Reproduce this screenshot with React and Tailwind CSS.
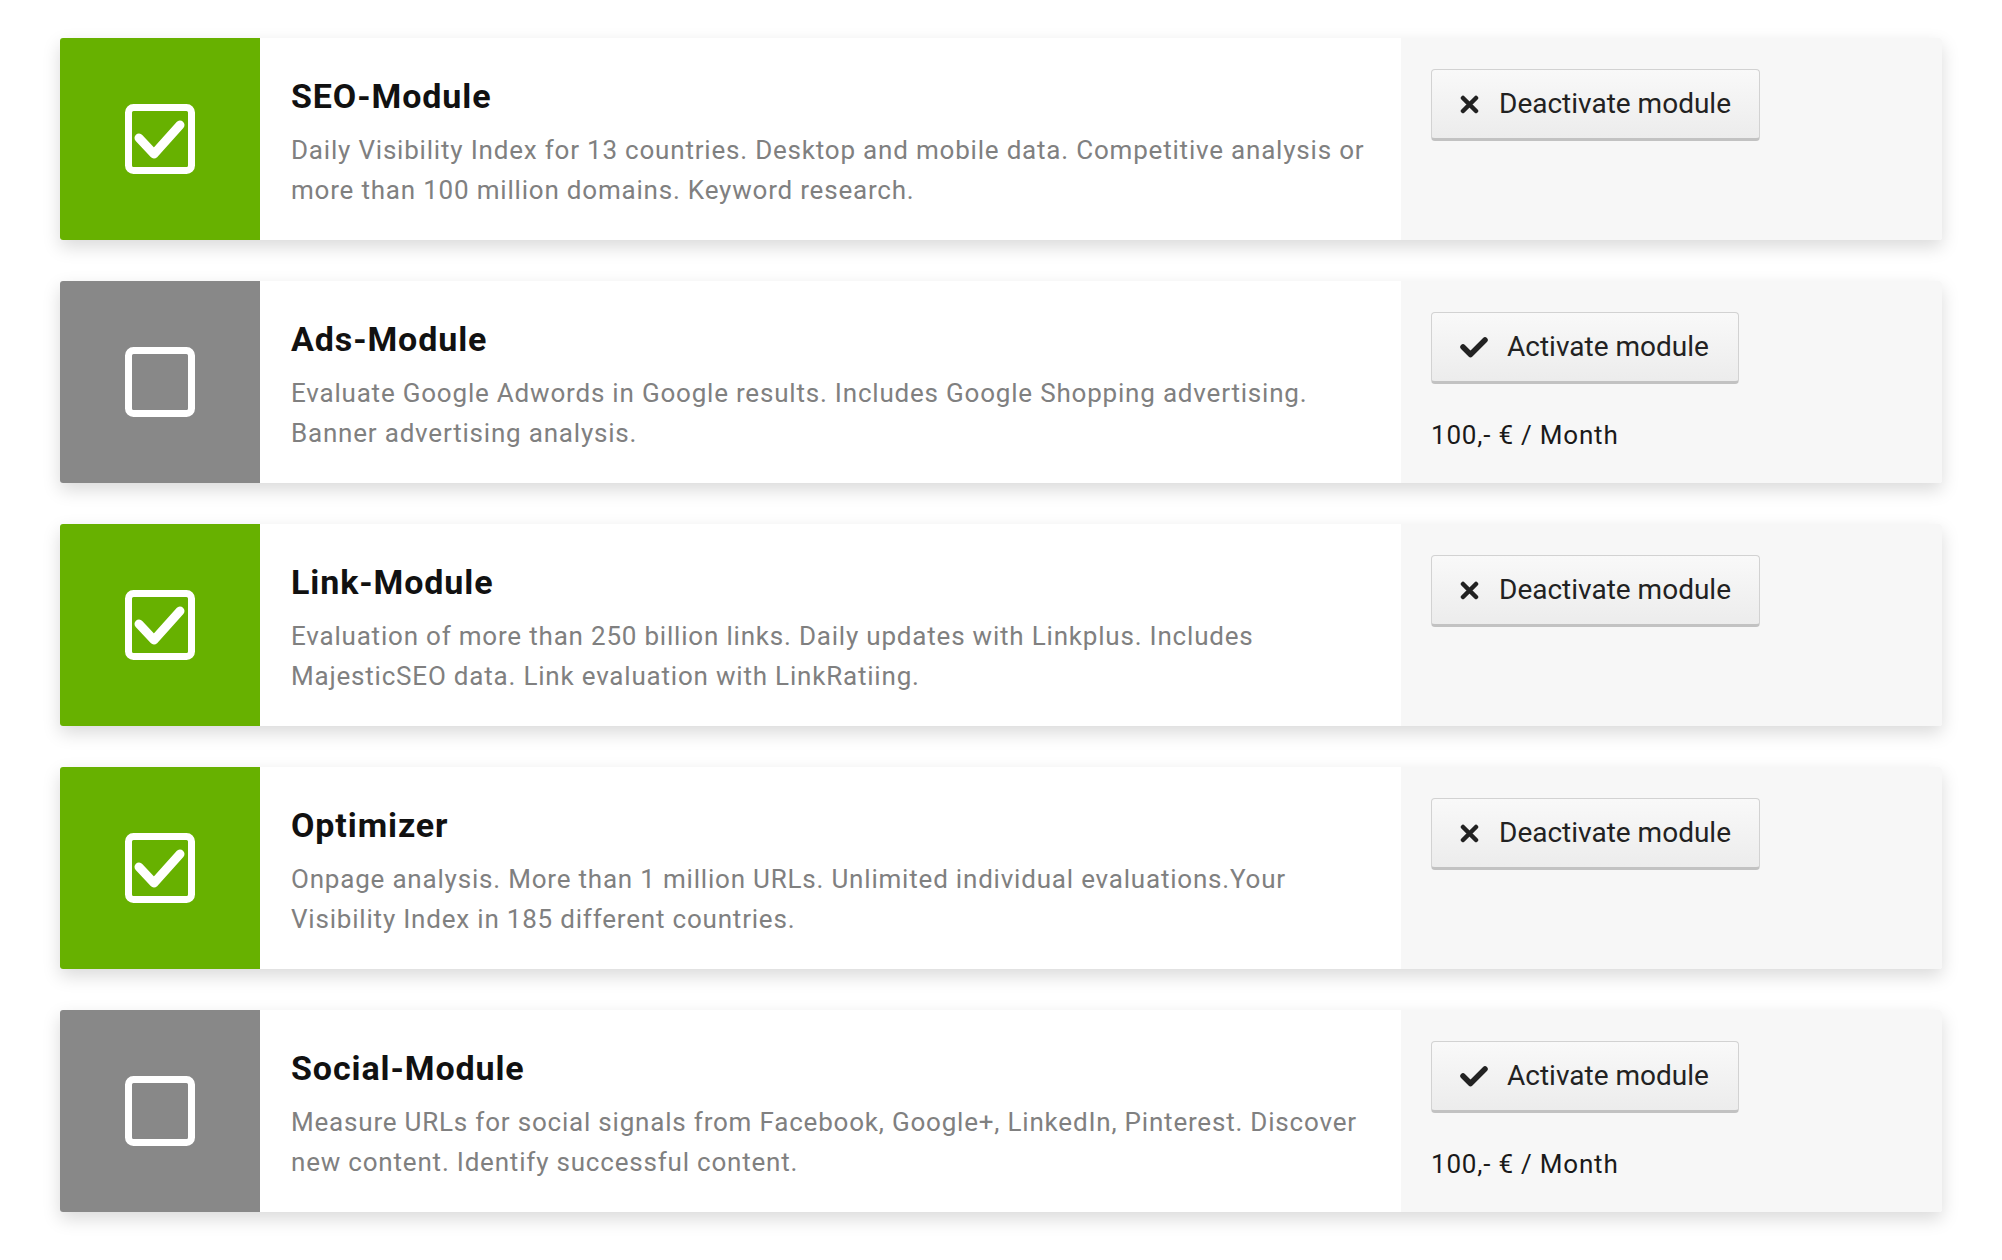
import React from "react";

const modules = [
  {
    title: "SEO-Module",
    text: "Daily Visibility Index for 13 countries. Desktop and mobile data. Competitive analysis or more than 100 million domains. Keyword research.",
    active: true,
  },
  {
    title: "Ads-Module",
    text: "Evaluate Google Adwords in Google results. Includes Google Shopping advertising. Banner advertising analysis.",
    active: false,
  },
  {
    title: "Link-Module",
    text: "Evaluation of more than 250 billion links. Daily updates with Linkplus. Includes MajesticSEO data. Link evaluation with LinkRatiing.",
    active: true,
  },
  {
    title: "Optimizer",
    text: "Onpage analysis. More than 1 million URLs. Unlimited individual evaluations.Your Visibility Index in 185 different countries.",
    active: true,
  },
  {
    title: "Social-Module",
    text: "Measure URLs for social signals from Facebook, Google+, LinkedIn, Pinterest. Discover new content. Identify successful content.",
    active: false,
  },
];

const BoxIcon = ({ checked }) => (
  <svg width="70" height="70" viewBox="0 0 70 70">
    <rect x="3.5" y="3.5" width="63" height="63" rx="5" fill="none" stroke="#fff" strokeWidth="7" />
    {checked && (
      <polyline
        points="14,34 29,50 55,21"
        fill="none"
        stroke="#fff"
        strokeWidth="9"
        strokeLinecap="round"
        strokeLinejoin="round"
      />
    )}
  </svg>
);

const TimesIcon = () => (
  <svg width="19" height="19" viewBox="0 0 19 19">
    <path d="M3 3 L16 16 M16 3 L3 16" stroke="#222" strokeWidth="4.5" strokeLinecap="round" />
  </svg>
);

const CheckIcon = () => (
  <svg width="28" height="21" viewBox="0 0 28 21">
    <polyline
      points="3,10 10.5,17.5 25,3"
      fill="none"
      stroke="#222"
      strokeWidth="5.5"
      strokeLinecap="round"
      strokeLinejoin="round"
    />
  </svg>
);

const ModuleCard = ({ mod }) => (
  <div className="flex min-h-[202px] rounded-[3px] shadow-[0_7px_18px_rgba(0,0,0,0.15)]">
    {/* Status */}
    <div
      className={
        mod.active
          ? "w-[200px] shrink-0 rounded-l-[3px] bg-[#67b100] flex items-center justify-center"
          : "w-[200px] shrink-0 rounded-l-[3px] bg-[#888888] flex items-center justify-center"
      }
    >
      <BoxIcon checked={mod.active} />
    </div>

    {/* Beschreibung */}
    <div className="flex-1 bg-white pt-[39px] pl-[31px] pr-[30px] pb-[28px]">
      <h2 className="text-[34px] leading-[38px] font-bold tracking-[0.9px] text-[#111]">{mod.title}</h2>
      <p className="mt-[15px] text-[26px] leading-[40px] tracking-[0.8px] text-[#808080]">{mod.text}</p>
    </div>

    {/* Aktion */}
    <div className="w-[541px] shrink-0 bg-[#f7f7f7] pt-[31px] pl-[30px] rounded-r-[3px]">
      <button
        className={
          mod.active
            ? "flex items-center gap-[20px] h-[72px] pl-[28px] pr-[28px] rounded-[4px] border border-[#d2d2d2] border-b-[3px] border-b-[#c2c2c2] bg-gradient-to-b from-[#f9f9f9] to-[#ececec] text-[28px] text-[#222]"
            : "flex items-center gap-[19px] h-[72px] pl-[28px] pr-[29px] rounded-[4px] border border-[#d2d2d2] border-b-[3px] border-b-[#c2c2c2] bg-gradient-to-b from-[#f9f9f9] to-[#ececec] text-[28px] text-[#222]"
        }
      >
        {mod.active ? <TimesIcon /> : <CheckIcon />}
        <span>{mod.active ? "Deactivate module" : "Activate module"}</span>
      </button>
      {!mod.active && (
        <div className="mt-[31px] text-[26px] leading-[40px] tracking-[0.8px] text-[#1a1a1a]">100,- € / Month</div>
      )}
    </div>
  </div>
);

export default function App() {
  return (
    <div
      className="min-h-[1260px] bg-white px-[60px] pt-[38px] pb-[40px] flex flex-col gap-[41px]"
      style={{ fontFamily: "Roboto, 'Liberation Sans', sans-serif" }}
    >
      {modules.map((mod) => (
        <ModuleCard key={mod.title} mod={mod} />
      ))}
    </div>
  );
}
